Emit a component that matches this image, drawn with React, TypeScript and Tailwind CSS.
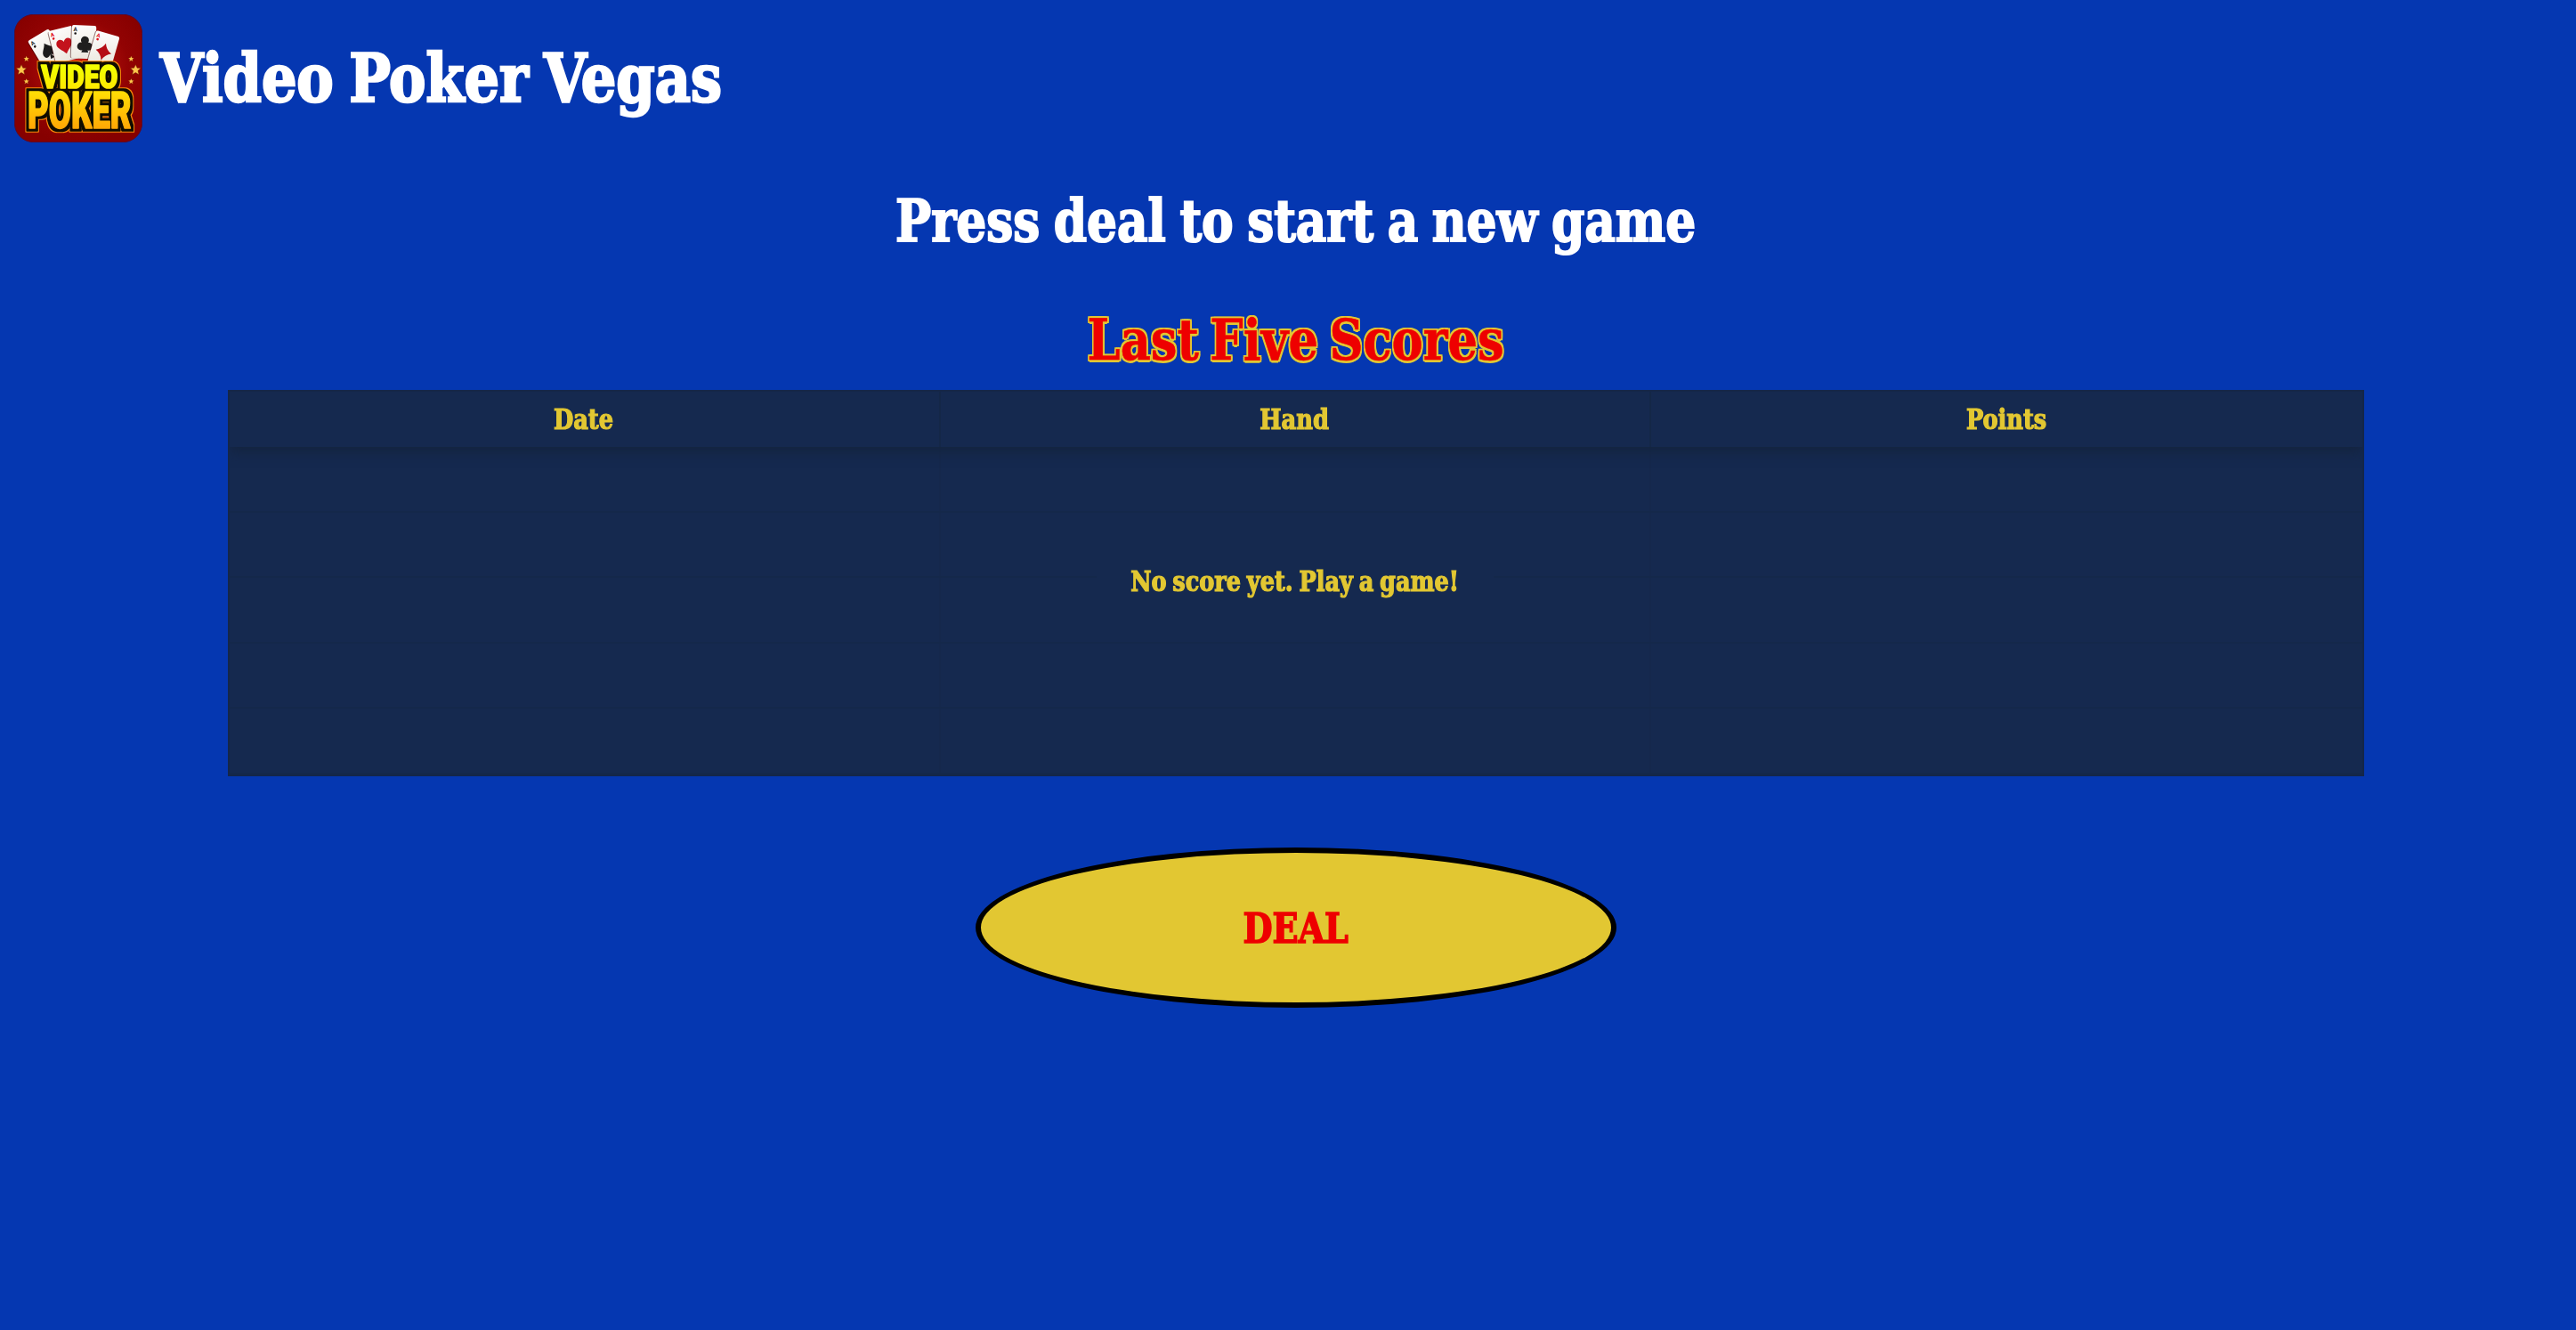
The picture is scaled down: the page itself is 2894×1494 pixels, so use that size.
import type { ReactNode } from "react";

function Words() {
  return (
    <g filter="url(#outline)" strokeLinejoin="round" className="font-['Roboto'] font-black">
      <text x="139" y="297" fontSize="109" textLength="258" lengthAdjust="spacingAndGlyphs" fill="url(#lemon)" stroke="url(#lemon)" strokeWidth="5">
        VIDEO
      </text>
      <text x="93" y="433" fontSize="170" textLength="350" lengthAdjust="spacingAndGlyphs" fill="url(#amber)" stroke="url(#amber)" strokeWidth="5">
        POKER
      </text>
    </g>
  );
}

function Card({ transform, color, children }: { transform: string; color: string; children: ReactNode }) {
  return (
    <g transform={transform}>
      <rect x="-3" y="2" width="82" height="110" rx="6" fill="#3a0000" opacity="0.5" />
      <rect width="82" height="112" rx="6" fill="url(#paper)" />
      <text x="5" y="21" fontSize="19" fill={color} className="font-['Roboto'] font-bold">
        A
      </text>
      <circle cx="12" cy="28" r="4" fill={color} />
      {children}
    </g>
  );
}

const STAR = "M0-10 3-3.5 10-3 4.5 2 6.5 9.5 0 5.5-6.5 9.5-4.5 2-10-3-3-3.5Z";
const STARS: [number, number, number][] = [
  [72, 235, 1.75],
  [89, 198, 0.95],
  [89, 274, 0.95],
  [457, 235, 1.75],
  [442, 198, 0.95],
  [442, 274, 0.95],
];

function Logo() {
  return (
    <svg viewBox="48 48 432 432" className="size-36 shrink-0" aria-label="Video Poker">
      <defs>
        <radialGradient id="felt" cx="0.5" cy="0.42" r="0.6">
          <stop offset="0" stopColor="#c81a12" />
          <stop offset="0.65" stopColor="#920303" />
          <stop offset="1" stopColor="#860000" />
        </radialGradient>
        <linearGradient id="paper" x1="0" y1="0" x2="0.3" y2="1">
          <stop offset="0" stopColor="#ffffff" />
          <stop offset="1" stopColor="#ece8df" />
        </linearGradient>
        <linearGradient id="lemon" x1="0" y1="0" x2="0" y2="1">
          <stop offset="0.25" stopColor="#f3ff00" />
          <stop offset="0.9" stopColor="#ffe400" />
        </linearGradient>
        <linearGradient id="amber" x1="0" y1="0" x2="0" y2="1">
          <stop offset="0.2" stopColor="#ffdc05" />
          <stop offset="0.85" stopColor="#ffa205" />
        </linearGradient>
        <filter id="outline" filterUnits="userSpaceOnUse" x="60" y="180" width="410" height="290" colorInterpolationFilters="sRGB">
          <feMorphology in="SourceAlpha" operator="dilate" radius="13" result="wide" />
          <feFlood floodColor="#f98a08" />
          <feComposite in2="wide" operator="in" result="rim" />
          <feMorphology in="SourceAlpha" operator="dilate" radius="8" result="narrow" />
          <feFlood floodColor="#100c00" />
          <feComposite in2="narrow" operator="in" result="ink" />
          <feMerge>
            <feMergeNode in="rim" />
            <feMergeNode in="ink" />
            <feMergeNode in="SourceGraphic" />
          </feMerge>
        </filter>
      </defs>
      <rect x="49" y="49" width="430" height="430" rx="64" fill="url(#felt)" stroke="#5a0b2c" strokeWidth="3" />
      <Card transform="translate(93 139) rotate(-31)" color="#1b1b1b">
        <path d="M44 35C52 52 71 58 66 75C62 86 50 83 46 77L51 92H37L42 77C38 83 26 86 22 75C17 58 36 52 44 35Z" fill="#1b1b1b" />
      </Card>
      <Card transform="translate(162 106) rotate(-14)" color="#e0101c">
        <path d="M43 88C33 72 13 63 17 47C21 33 38 34 43 47C48 34 65 33 69 47C73 63 53 72 43 88Z" fill="#c3131d" />
      </Card>
      <Card transform="translate(243 84) rotate(2)" color="#1b1b1b">
        <g fill="#1f1f1f">
          <circle cx="45" cy="50" r="13.5" />
          <circle cx="33" cy="71" r="13.5" />
          <circle cx="58" cy="71" r="13.5" />
          <path d="M42 55H49L51 74L58 91H34L41 74Z" />
        </g>
      </Card>
      <Card transform="translate(325 102) rotate(16)" color="#e0101c">
        <path d="M43 34Q50 55 70 63Q50 71 43 93Q36 71 16 63Q36 55 43 34Z" fill="#b50d15" />
      </Card>
      {STARS.map(([x, y, s]) => (
        <path key={`${x}-${y}`} d={STAR} transform={`translate(${x} ${y}) scale(${s})`} fill="#fcc64c" stroke="#6e1500" strokeWidth="0.8" />
      ))}
      <Words />
    </svg>
  );
}

const HEADINGS = ["Date", "Hand", "Points"];
const ROWS = [0, 1, 2, 3, 4];

function ScoreTable() {
  return (
    <div className="relative h-[434px] w-[2400px] overflow-hidden border-2 border-[#142649] bg-[#15294f] text-[31px] leading-none text-[#e2c732]">
      <div className="relative grid h-[62px] grid-cols-3 bg-[#15294f] shadow-[0_6px_12px_rgba(20,36,62,0.9)]">
        {HEADINGS.map((h) => (
          <div key={h} className="flex items-center justify-center border-r-2 border-[#142747] pr-[2px] last:border-r-0">
            <span className="scale-x-[0.92] [-webkit-text-stroke:1.2px_currentColor]">{h}</span>
          </div>
        ))}
      </div>
      {ROWS.map((r) => (
        <div key={r} className="grid h-[73.6px] grid-cols-3 border-b-2 border-[#14284a] last:border-b-0">
          {HEADINGS.map((h) => (
            <div key={h} className="border-r-2 border-[#15284c] last:border-r-0" />
          ))}
        </div>
      ))}
      <div className="absolute top-[160px] left-[974px] flex h-[106px] w-[446px] items-center justify-center bg-[#15294f] whitespace-nowrap">
        <span className="scale-x-[0.915] [word-spacing:-0.07em] [-webkit-text-stroke:1.2px_currentColor]">No score yet. Play a game!</span>
      </div>
    </div>
  );
}

export default function App() {
  return (
    <div className="h-[1494px] w-full overflow-hidden bg-[#0537b1] font-['DejaVu_Serif_Condensed','DejaVu_Serif',serif] font-bold text-white">
      <div className="flex w-[2912px] flex-col items-center">
        <header className="flex h-[176px] w-full items-center gap-5 pl-4">
          <Logo />
          <h1 className="origin-left scale-x-[0.932] text-[74px] leading-none whitespace-nowrap [word-spacing:-0.06em] [-webkit-text-stroke:2.5px_currentColor]">
            Video Poker Vegas
          </h1>
        </header>
        <h2 className="mt-9 flex h-[72px] scale-x-[0.898] items-center text-[66px] leading-none whitespace-nowrap [word-spacing:-0.05em] [-webkit-text-stroke:2px_currentColor]">
          Press deal to start a new game
        </h2>
        <h3 className="mt-[62px] flex h-[72px] scale-x-[0.93] items-center text-[63px] leading-none whitespace-nowrap text-[#ee0000] [word-spacing:-0.1em] [-webkit-text-stroke:0.5px_currentColor] [text-shadow:-2px_-2px_0_#e2c732,2px_-2px_0_#e2c732,-2px_2px_0_#e2c732,2px_2px_0_#e2c732,0_3px_0_#e2c732,0_-2px_0_#e2c732,-2px_0_0_#e2c732,2px_0_0_#e2c732]">
          Last Five Scores
        </h3>
        <div className="mt-5">
          <ScoreTable />
        </div>
        <button className="mt-20 flex h-[180px] w-[720px] items-center justify-center rounded-[50%] border-[6px] border-black bg-[#e2c732] text-[47px] leading-none text-[#ee0000]">
          <span className="scale-x-[0.9] [-webkit-text-stroke:1.6px_currentColor]">DEAL</span>
        </button>
      </div>
    </div>
  );
}
